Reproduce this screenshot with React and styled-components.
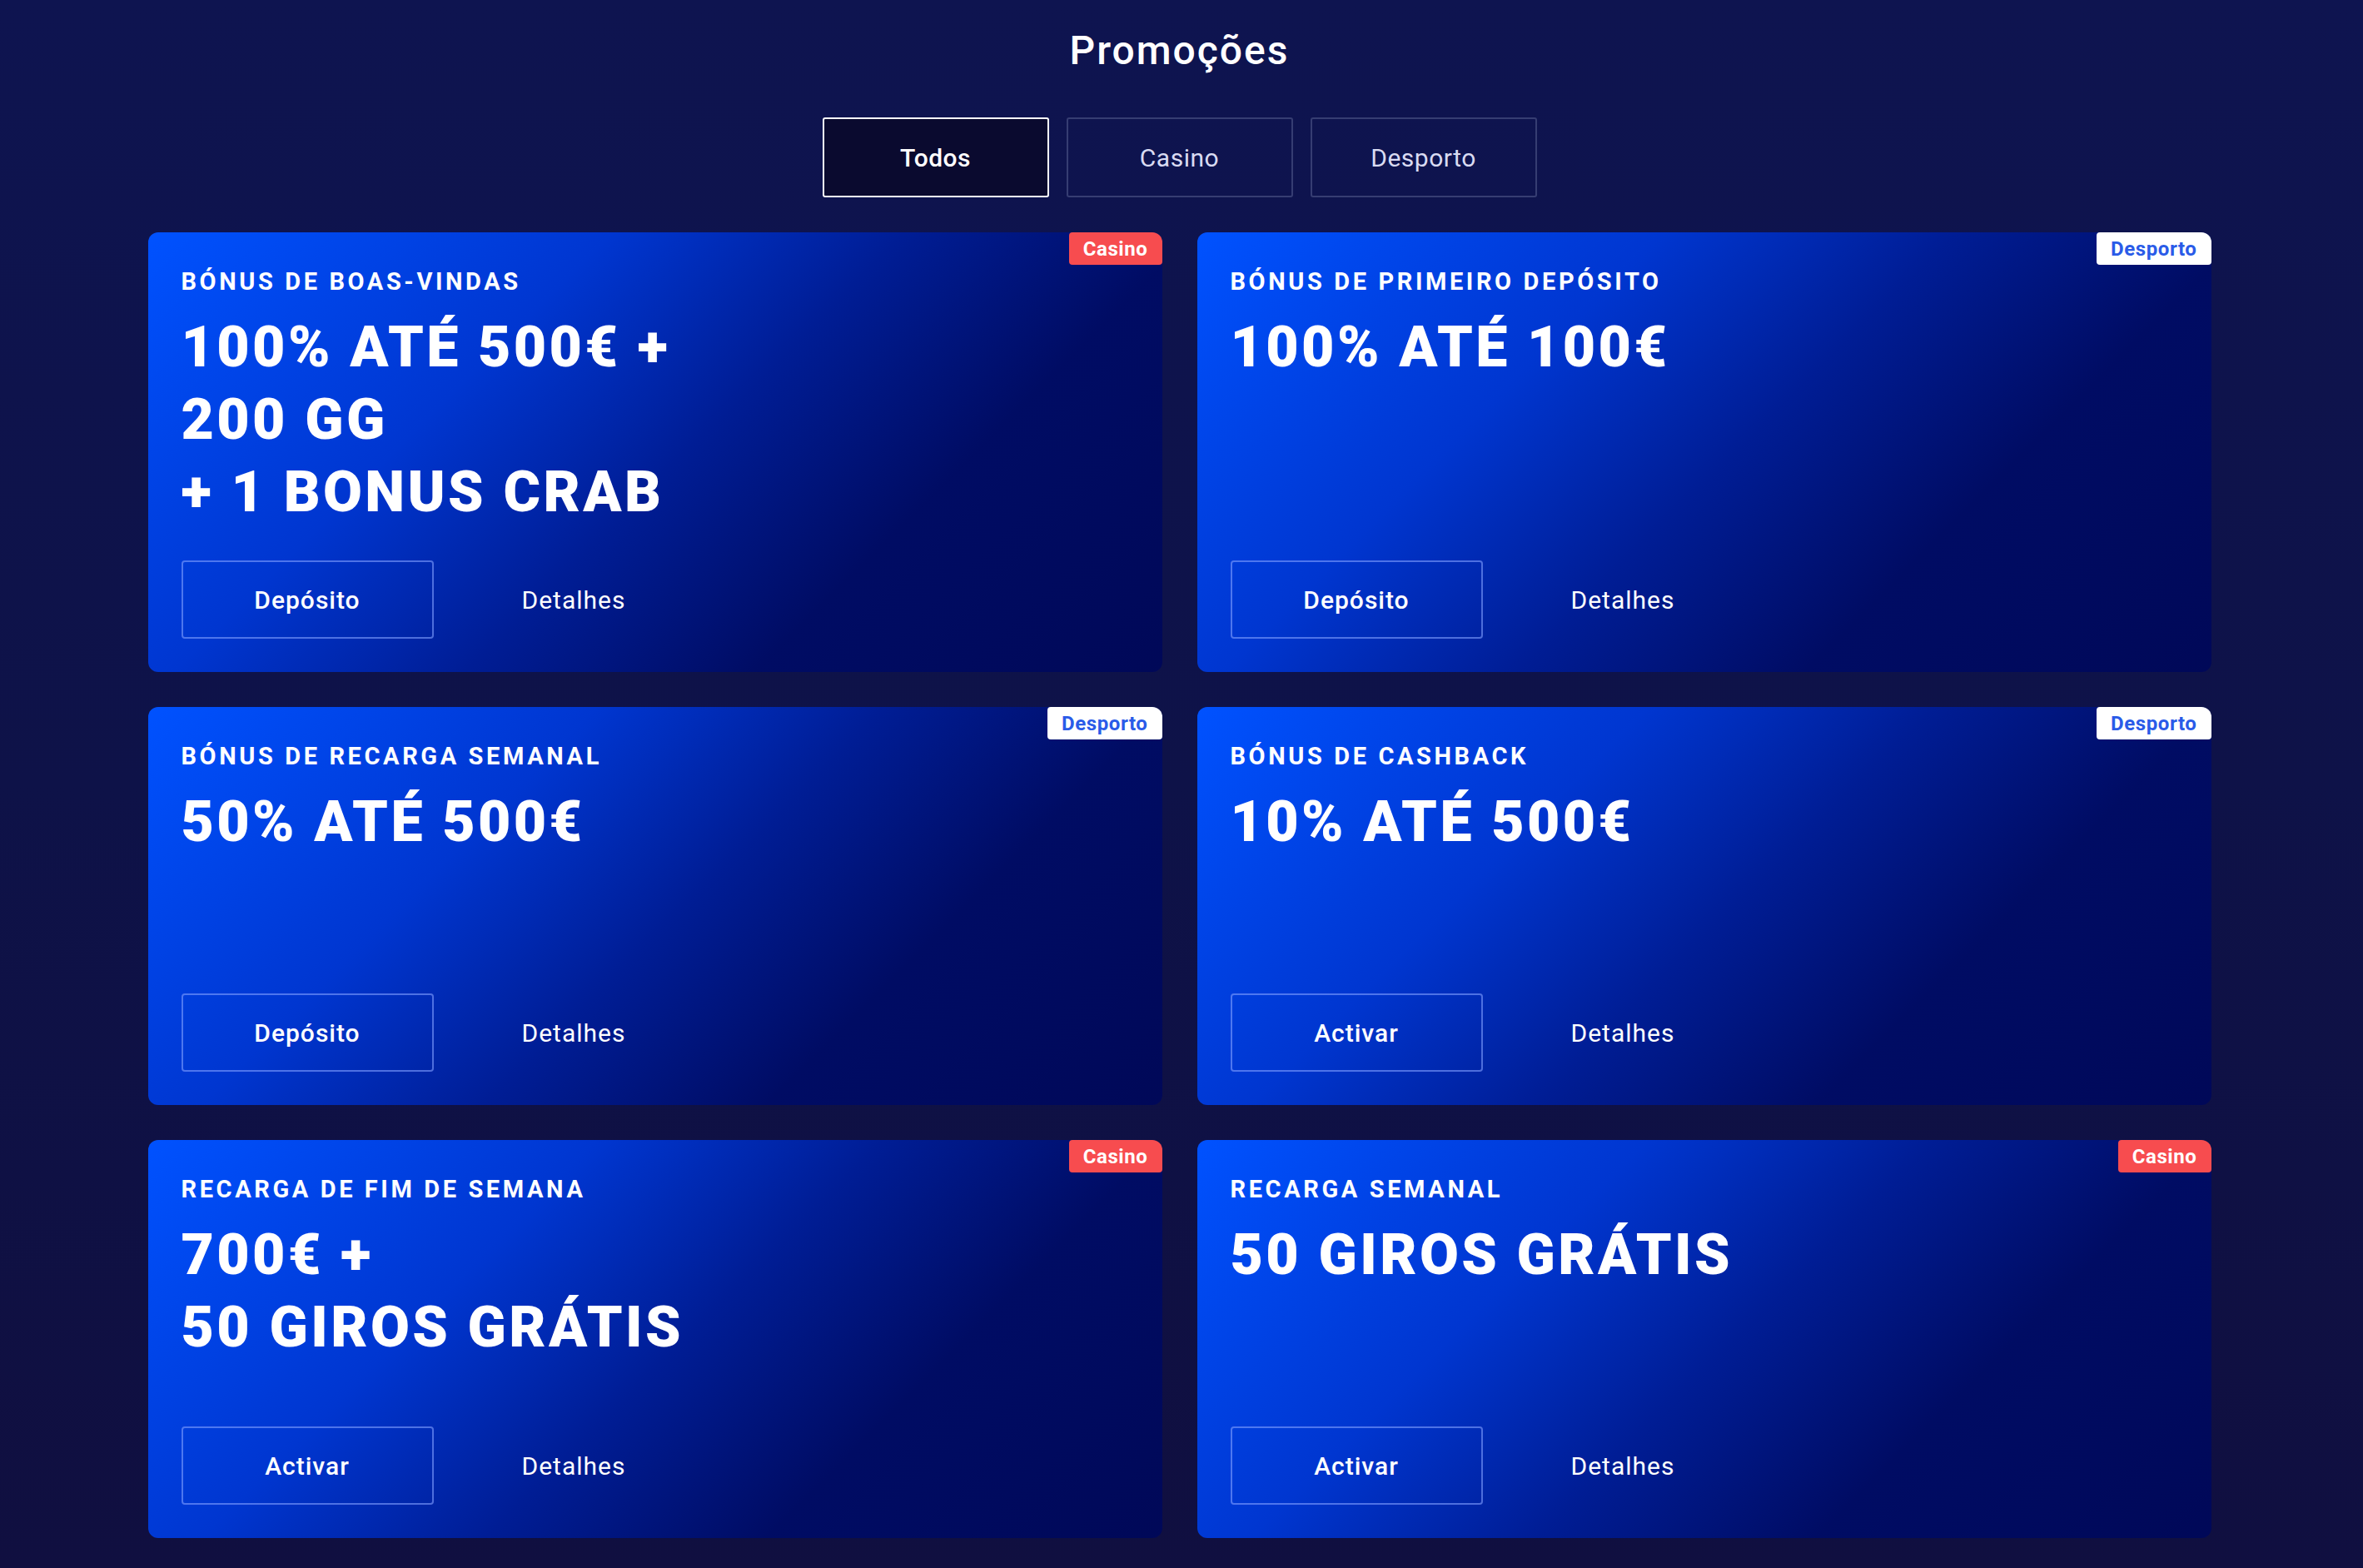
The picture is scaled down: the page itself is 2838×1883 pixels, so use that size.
import React from 'react'
import styled, { createGlobalStyle } from 'styled-components'

const GlobalStyle = createGlobalStyle`
  html, body {
    margin: 0;
    padding: 0;
    background: #0e1248;
  }
  body {
    font-family: Roboto, 'Liberation Sans', sans-serif;
    color: #fff;
  }
`

const Page = styled.div`
  min-height: 100vh;
  box-sizing: border-box;
  padding: 33px 5px 35px 0;
  background: linear-gradient(180deg, #0e1450 0%, #0e1248 50%, #100f40 100%);
`

const Title = styled.h1`
  margin: 0;
  text-align: center;
  font-size: 48px;
  line-height: 56px;
  font-weight: 500;
  letter-spacing: 2px;
  color: #fff;
`

const Tabs = styled.div`
  display: flex;
  justify-content: center;
  gap: 21px;
  margin-top: 52px;
`

const Tab = styled.button`
  width: 272px;
  height: 96px;
  box-sizing: border-box;
  border-radius: 3px;
  font-family: Roboto, 'Liberation Sans', sans-serif;
  font-size: 30px;
  letter-spacing: 0.5px;
  cursor: pointer;
  border: 2px solid ${(p) => (p.$active ? '#ffffff' : '#363d72')};
  background: ${(p) => (p.$active ? '#0a0a2f' : 'transparent')};
  color: ${(p) => (p.$active ? '#ffffff' : '#d9dbf2')};
  font-weight: ${(p) => (p.$active ? 500 : 400)};
`

const Grid = styled.div`
  display: grid;
  grid-template-columns: repeat(2, 1218px);
  justify-content: center;
  gap: 42px;
  margin-top: 42px;
`

const Card = styled.div`
  position: relative;
  display: flex;
  flex-direction: column;
  box-sizing: border-box;
  min-height: 478px;
  padding: 43px 40px 40px;
  border-radius: 12px;
  background: linear-gradient(
    135deg,
    #0052ff 0%,
    #0036d0 32%,
    #001d95 52%,
    #000c64 72%,
    #000858 100%
  );
`

const Badge = styled.span`
  position: absolute;
  top: 0;
  right: 0;
  height: 39px;
  padding: 0 17px;
  display: flex;
  align-items: center;
  border-radius: 4px 12px 4px 4px;
  font-size: 24px;
  font-weight: 700;
  letter-spacing: 0.6px;
  background: ${(p) => (p.$kind === 'Casino' ? '#f74c4f' : '#ffffff')};
  color: ${(p) => (p.$kind === 'Casino' ? '#ffffff' : '#2a5be8')};
`

const Label = styled.div`
  font-size: 29px;
  line-height: 33px;
  font-weight: 700;
  letter-spacing: 3.6px;
  text-transform: uppercase;
`

const Headline = styled.div`
  margin-top: 19px;
  font-size: 68px;
  line-height: 87px;
  font-weight: 900;
  letter-spacing: 3.4px;
`

const Actions = styled.div`
  display: flex;
  gap: 17px;
  margin-top: auto;
  padding-top: 38px;
`

const Action = styled.button`
  width: 303px;
  height: 94px;
  box-sizing: border-box;
  border-radius: 4px;
  background: transparent;
  color: #fff;
  font-family: Roboto, 'Liberation Sans', sans-serif;
  font-size: 30px;
  letter-spacing: 1px;
  cursor: pointer;
  border: 2px solid ${(p) => (p.$ghost ? 'transparent' : 'rgba(130, 160, 255, 0.6)')};
  font-weight: ${(p) => (p.$ghost ? 400 : 500)};
`

const promos = [
  {
    kind: 'Casino',
    label: 'Bónus de boas-vindas',
    lines: ['100% ATÉ 500€ +', '200 GG', '+ 1 BONUS CRAB'],
    action: 'Depósito',
  },
  {
    kind: 'Desporto',
    label: 'Bónus de primeiro depósito',
    lines: ['100% ATÉ 100€'],
    action: 'Depósito',
  },
  {
    kind: 'Desporto',
    label: 'Bónus de recarga semanal',
    lines: ['50% ATÉ 500€'],
    action: 'Depósito',
  },
  {
    kind: 'Desporto',
    label: 'Bónus de cashback',
    lines: ['10% ATÉ 500€'],
    action: 'Activar',
  },
  {
    kind: 'Casino',
    label: 'Recarga de fim de semana',
    lines: ['700€ +', '50 GIROS GRÁTIS'],
    action: 'Activar',
  },
  {
    kind: 'Casino',
    label: 'Recarga semanal',
    lines: ['50 GIROS GRÁTIS'],
    action: 'Activar',
  },
]

function PromoCard({ kind, label, lines, action }) {
  return (
    <Card>
      <Badge $kind={kind}>{kind}</Badge>
      <Label>{label}</Label>
      <Headline>
        {lines.map((line, i) => (
          <div key={i}>{line}</div>
        ))}
      </Headline>
      <Actions>
        <Action>{action}</Action>
        <Action $ghost>Detalhes</Action>
      </Actions>
    </Card>
  )
}

export default function App() {
  return (
    <>
      <GlobalStyle />
      <Page>
        <Title>Promoções</Title>
        <Tabs>
          <Tab $active>Todos</Tab>
          <Tab>Casino</Tab>
          <Tab>Desporto</Tab>
        </Tabs>
        <Grid>
          {promos.map((p, i) => (
            <PromoCard key={i} {...p} />
          ))}
        </Grid>
      </Page>
    </>
  )
}
